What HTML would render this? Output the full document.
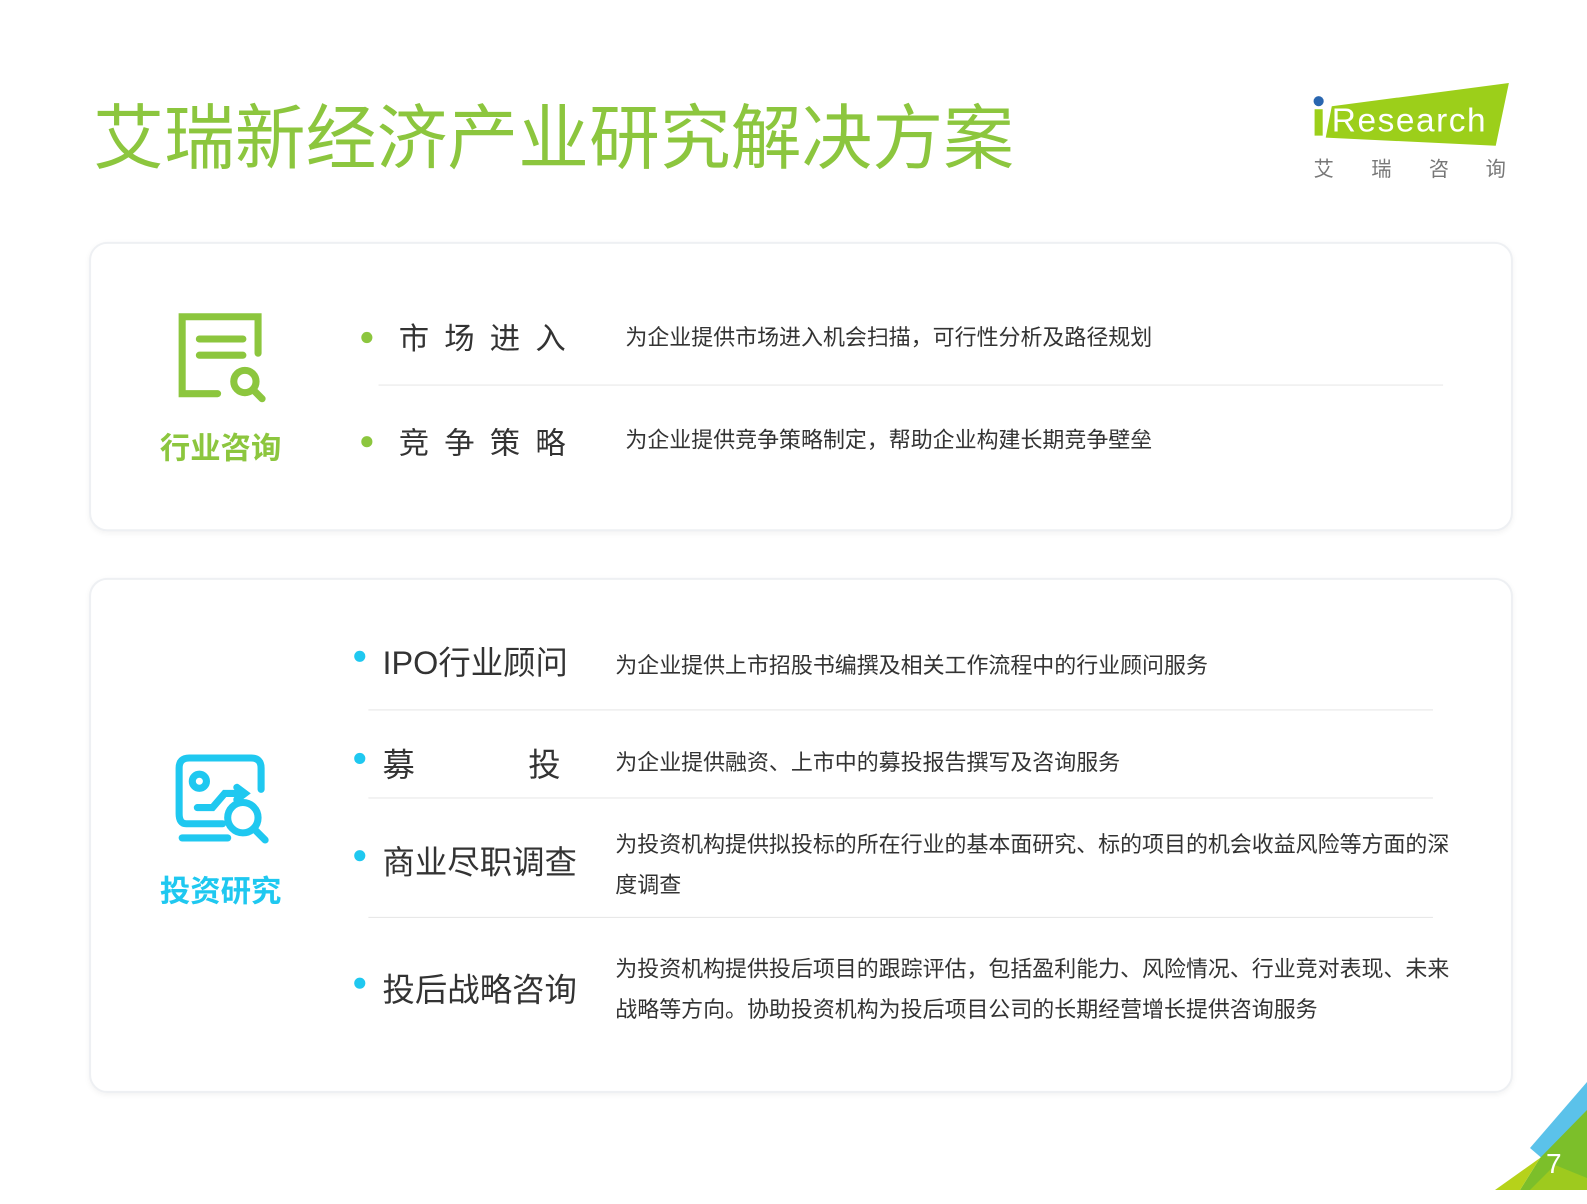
<!DOCTYPE html>
<html><head><meta charset="utf-8"><style>
body{margin:0;width:1587px;height:1190px;background:#fff;position:relative;overflow:hidden;font-family:"Liberation Sans","Noto Sans CJK SC",sans-serif;color:#333}
#w{position:absolute;left:0;top:0;width:1587px;height:1190px;transform:scale(1.012);transform-origin:0 0}
.a{position:absolute;white-space:nowrap}
.card{position:absolute;left:88px;width:1403px;border:2px solid #eef0f3;border-radius:18px;box-shadow:0 2px 6px rgba(0,0,0,.05);background:#fff}
.ln{position:absolute;height:1px;background:#e6e6e6}
.dot{position:absolute;width:11px;height:11px;border-radius:50%}
.h1{font-size:30px;color:#333}
.h2{font-size:32px;color:#333}
.d{font-size:21.7px;color:#333}
</style></head><body>
<div id="w">
<div class="a" style="left:92px;top:81px;font-size:70px;color:#8cc63e">艾瑞新经济产业研究解决方案</div>
<svg class="a" style="left:1294px;top:78px" width="210" height="110">
<polygon points="22,27 197,4 184,66 16,58" fill="#9ccf1a"/>
<circle cx="9" cy="22" r="5" fill="#2966b0"/>
<polygon points="5,30 13,30 13,56 5,56" fill="#9ccf1a"/>
<text x="22" y="52" font-family="Liberation Sans" font-size="33" fill="#fff" textLength="152">Research</text>
<text x="4" y="96" font-family="Noto Sans CJK SC" font-size="20" fill="#777">艾</text>
<text x="61" y="96" font-family="Noto Sans CJK SC" font-size="20" fill="#777">瑞</text>
<text x="118" y="96" font-family="Noto Sans CJK SC" font-size="20" fill="#777">咨</text>
<text x="174" y="96" font-family="Noto Sans CJK SC" font-size="20" fill="#777">询</text>
</svg>

<div class="card" style="top:239px;height:282px"></div>
<div class="card" style="top:571px;height:505px"></div>

<svg class="a" style="left:170px;top:305px" width="100" height="100" fill="none" stroke="#8cc63e" stroke-width="7" stroke-linecap="round">
<path d="M45,84 H10 V8 H85 V44"/><path d="M27,30 H70 M27,46 H70"/>
<circle cx="72" cy="72" r="11"/><path d="M80,80 L89,89"/>
</svg>
<div class="a" style="left:158px;top:418px;font-size:30px;font-weight:bold;color:#8cc63e">行业咨询</div>

<svg class="a" style="left:170px;top:742px" width="100" height="95" fill="none" stroke="#1fc8f0" stroke-width="7" stroke-linecap="round">
<path d="M50,72 H14 Q7,72 7,62 V17 Q7,7 17,7 H78 Q88,7 88,17 V38"/>
<circle cx="27" cy="30" r="7"/><path d="M25,56 H40 L52,42 H70 M64,36 L72,42 L64,48"/>
<circle cx="70" cy="66" r="15"/><path d="M81,77 L92,88"/><path d="M10,86 H55"/>
</svg>
<div class="a" style="left:158px;top:856px;font-size:30px;font-weight:bold;color:#1fc8f0">投资研究</div>

<div class="dot" style="left:357px;top:328px;background:#8cc63e"></div>
<div class="a h1" style="left:394px;top:310px;letter-spacing:15px">市场进入</div>
<div class="a d" style="left:618px;top:317px">为企业提供市场进入机会扫描，可行性分析及路径规划</div>
<div class="ln" style="left:374px;top:380px;width:1052px"></div>
<div class="dot" style="left:357px;top:431px;background:#8cc63e"></div>
<div class="a h1" style="left:394px;top:413px;letter-spacing:15px">竞争策略</div>
<div class="a d" style="left:618px;top:418px">为企业提供竞争策略制定，帮助企业构建长期竞争壁垒</div>

<div class="dot" style="left:350px;top:643px;background:#1fc8f0"></div>
<div class="a h2" style="left:378px;top:630px">IPO行业顾问</div>
<div class="a d" style="left:608px;top:641px">为企业提供上市招股书编撰及相关工作流程中的行业顾问服务</div>
<div class="ln" style="left:364px;top:701px;width:1052px"></div>
<div class="dot" style="left:350px;top:744px;background:#1fc8f0"></div>
<div class="a h2" style="left:378px;top:731px">募</div>
<div class="a h2" style="left:522px;top:731px">投</div>
<div class="a d" style="left:608px;top:737px">为企业提供融资、上市中的募投报告撰写及咨询服务</div>
<div class="ln" style="left:364px;top:788px;width:1052px"></div>
<div class="dot" style="left:350px;top:840px;background:#1fc8f0"></div>
<div class="a h2" style="left:378px;top:827px">商业尽职调查</div>
<div class="a d" style="left:608px;top:815px;line-height:40px">为投资机构提供拟投标的所在行业的基本面研究、标的项目的机会收益风险等方面的深<br>度调查</div>
<div class="ln" style="left:364px;top:906px;width:1052px"></div>
<div class="dot" style="left:350px;top:966px;background:#1fc8f0"></div>
<div class="a h2" style="left:378px;top:953px">投后战略咨询</div>
<div class="a d" style="left:608px;top:938px;line-height:40px">为投资机构提供投后项目的跟踪评估，包括盈利能力、风险情况、行业竞对表现、未来<br>战略等方向。协助投资机构为投后项目公司的长期经营增长提供咨询服务</div>
</div>

<svg class="a" style="left:1460px;top:1060px" width="127" height="130">
<polygon points="127,22 127,52 84,100 70,88" fill="#5bc2ea"/>
<polygon points="127,50 127,130 60,130 80,98" fill="#7cbf2a"/>
<polygon points="80,98 60,130 35,130" fill="#b6d21a"/>
<polygon points="95,105 127,118 127,130 70,130" fill="#a6cd1c" opacity=".8"/>
<text x="86" y="113" font-family="Liberation Sans" font-size="28" fill="#fff">7</text>
</svg>
</body></html>
